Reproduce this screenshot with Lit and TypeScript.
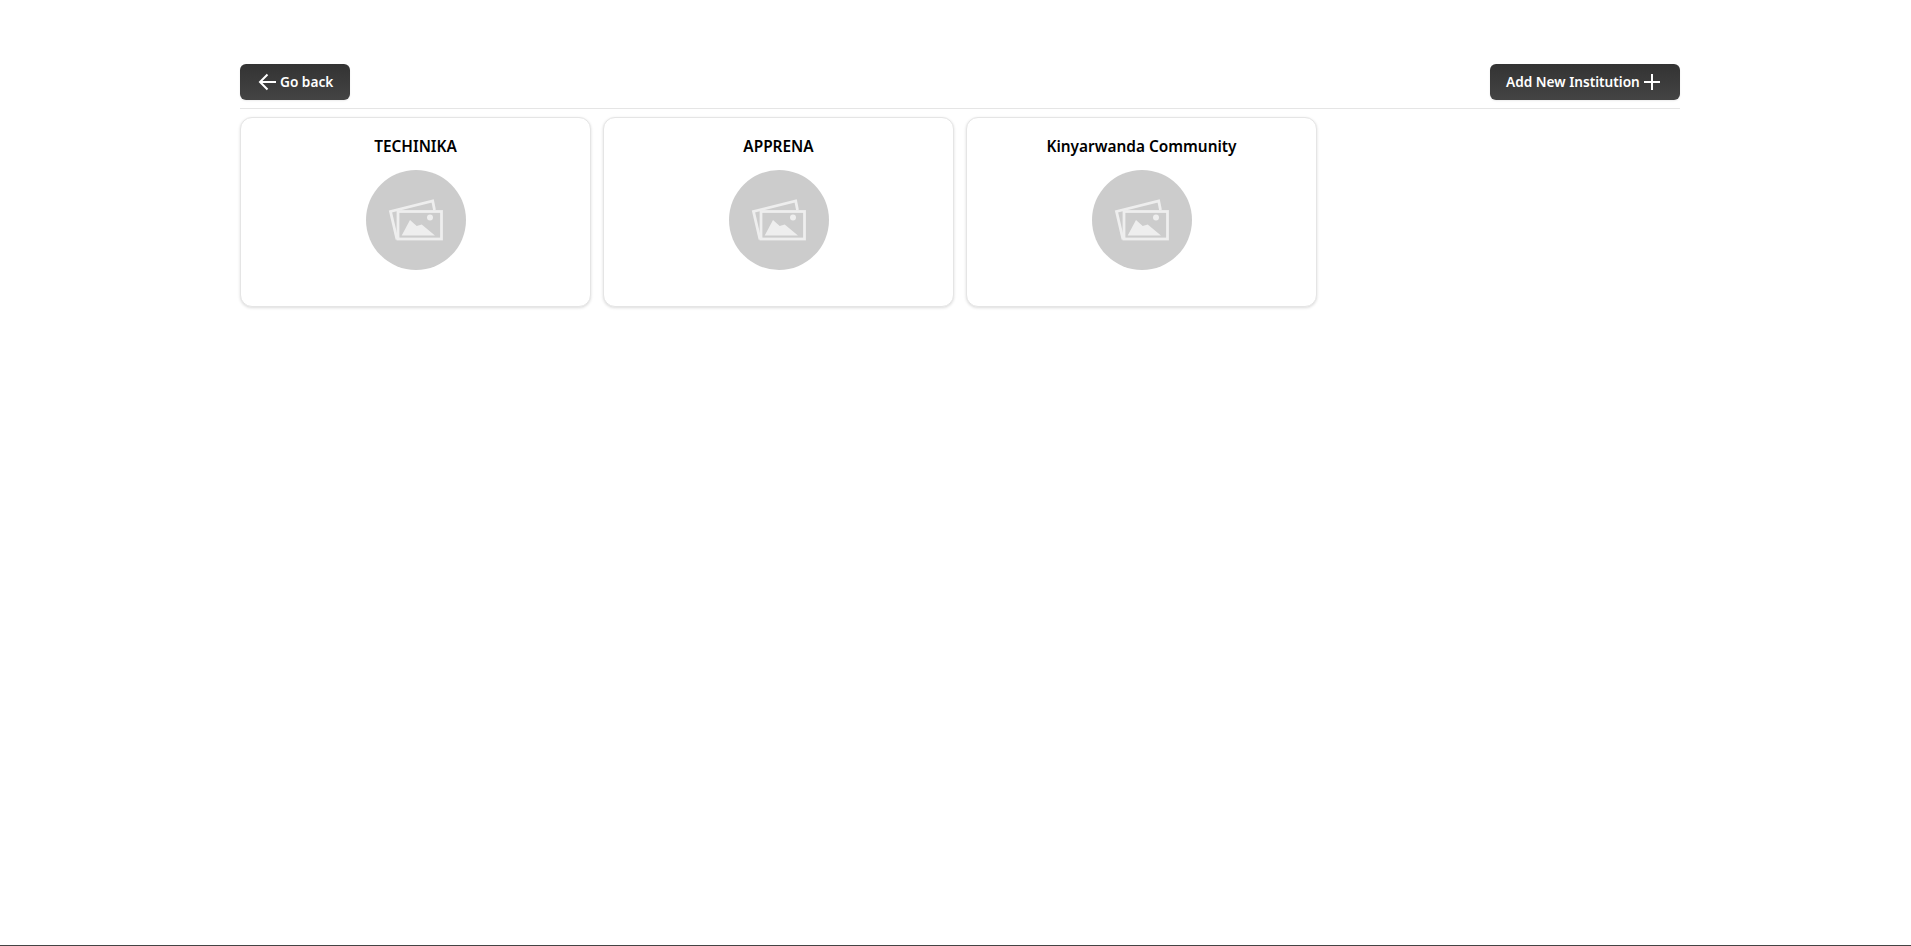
import { LitElement, html, css } from "lit";
import { customElement } from "lit/decorators.js";

const NAMES = ["TECHINIKA", "APPRENA", "Kinyarwanda Community"];

@customElement("app-root")
export class AppRoot extends LitElement {
  static styles = css`
    :host {
      display: flex;
      flex-direction: column;
      height: 946px;
      box-sizing: border-box;
      background: #fff;
      font-family: "Noto Sans", sans-serif;
      border-bottom: 1px solid #444;
    }
    .wrap {
      width: 1440px;
      margin-left: 240px;
      padding-top: 64px;
    }
    .top {
      display: flex;
      justify-content: space-between;
      padding-bottom: 8px;
      border-bottom: 1px solid #e5e5e5;
    }
    .btn {
      display: flex;
      align-items: center;
      height: 36px;
      padding: 0 16px;
      box-sizing: border-box;
      border: 0;
      border-radius: 6px;
      background: linear-gradient(#333, #444);
      color: #fff;
      font: 600 13.65px "Noto Sans", sans-serif;
      line-height: 20px;
      box-shadow: 0 1px 2px rgba(0, 0, 0, 0.08);
    }
    .back {
      width: 110px;
    }
    .add {
      width: 190px;
      justify-content: space-between;
    }
    .btn svg {
      flex: none;
    }
    .grid {
      display: grid;
      grid-template-columns: repeat(4, 351px);
      gap: 12px;
      margin-top: 8px;
    }
    .card {
      display: flex;
      flex-direction: column;
      align-items: center;
      height: 190px;
      box-sizing: border-box;
      padding-top: 18px;
      border: 1px solid #e5e5e5;
      border-radius: 12px;
      background: #fff;
      box-shadow: 0 1px 3px rgba(0, 0, 0, 0.14);
    }
    .name {
      font-size: 15.4px;
      font-weight: 600;
      line-height: 22px;
      color: #000;
    }
    .circle {
      display: flex;
      align-items: center;
      justify-content: center;
      width: 100px;
      height: 100px;
      margin-top: 12px;
      border-radius: 50%;
      background: #ccc;
    }
  `;

  render() {
    return html`<div class="wrap">
      <div class="top">
        <button class="btn back">
          <svg width="24" height="24" viewBox="0 0 24 24" fill="none" stroke="#fff" stroke-width="2">
            <path d="M20 12H4.500M11.500 4.500L4 12l7.500 7.500" />
          </svg>
          Go back
        </button>
        <button class="btn add">
          Add New Institution
          <svg width="24" height="24" viewBox="0 0 24 24" fill="none" stroke="#fff" stroke-width="2">
            <path d="M12 4v16M4 12h16" />
          </svg>
        </button>
      </div>
      <div class="grid">
        ${NAMES.map(
          (n) => html`<div class="card">
            <div class="name">${n}</div>
            <div class="circle">
              <svg width="56" height="44" viewBox="0 0 56 44">
                <path d="M9 41.500L2.500 13.500 44.700 3l1.800 9" fill="none" stroke="#eee" stroke-width="2.800" />
                <rect x="10" y="13.500" width="43.500" height="27.500" fill="#ccc" stroke="#eee" stroke-width="2.800" />
                <circle cx="42" cy="19.500" r="3" fill="#eee" />
                <path d="M13.700 37.500L22 22l6.700 6 5-1.500L47 37.500z" fill="#eee" />
              </svg>
            </div>
          </div>`
        )}
      </div>
    </div>`;
  }
}
